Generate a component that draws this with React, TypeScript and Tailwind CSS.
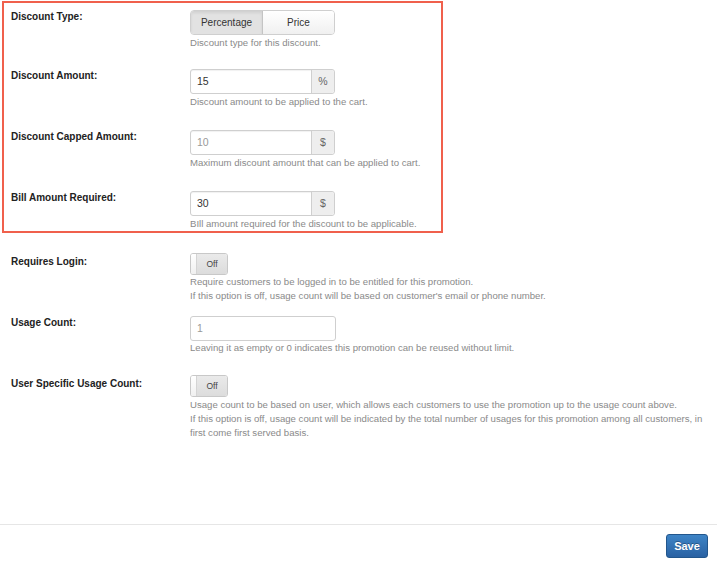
import React from 'react';

const font = { fontFamily: '"Liberation Sans", Arial, sans-serif' };

function Label({ children, pad = 'pt-0' }: { children: React.ReactNode; pad?: string }) {
  return (
    <div className={`w-[186px] shrink-0 pl-[7px] text-[10px] font-bold leading-[14px] text-[#222] ${pad}`}>
      {children}
    </div>
  );
}

function Help({ children }: { children: React.ReactNode }) {
  return <div className="text-[9.6px] leading-[14px] text-[#8a8a8a]">{children}</div>;
}

function AddonInput({ value, addon, muted }: { value: string; addon: string; muted?: boolean }) {
  return (
    <div className="flex h-[25px] w-[145px] rounded-[3px] border border-[#cfcfcf] shadow-[inset_0_1px_1px_rgba(0,0,0,0.06)]">
      <div className={`flex flex-1 items-center pl-[6px] text-[10.5px] ${muted ? 'text-[#999]' : 'text-[#333]'}`}>
        {value}
      </div>
      <div className="flex w-[23px] items-center justify-center rounded-r-[3px] border-l border-[#cfcfcf] bg-[#eeeeee] text-[10.5px] text-[#666]">
        {addon}
      </div>
    </div>
  );
}

function Toggle() {
  return (
    <div className="flex h-[22px] w-[38px] overflow-hidden rounded-[3px] border border-[#c8c8c8]">
      <div className="w-[6px] border-r border-[#d4d4d4] bg-gradient-to-b from-white to-[#f0f0f0]" />
      <div className="flex flex-1 items-center justify-center bg-gradient-to-b from-[#eaeaea] to-[#dcdcdc] text-[8.5px] text-[#444]">
        Off
      </div>
    </div>
  );
}

export default function App() {
  return (
    <div className="flex h-[564px] w-[717px] flex-col bg-white" style={font}>
      <div className="h-[525px] border-b border-[#e6e6e6]">
        <div className="ml-[2px] mt-[1px] w-[441px] border-2 border-[#f0604c] pt-[7px]">
          <div className="flex pb-[19px]">
            <Label>Discount Type:</Label>
            <div>
              <div className="flex h-[25px] w-[145px] overflow-hidden rounded-[4px] border border-[#cfcfcf] text-[10px] text-[#333]">
                <div className="flex w-[72px] items-center justify-center border-r border-[#c4c4c4] bg-[#e2e2e2] shadow-[inset_0_2px_3px_rgba(0,0,0,0.08)]">
                  Percentage
                </div>
                <div className="flex flex-1 items-center justify-center bg-gradient-to-b from-white to-[#f0f0f0]">
                  Price
                </div>
              </div>
              <div className="mt-[1px]">
                <Help>Discount type for this discount.</Help>
              </div>
            </div>
          </div>
          <div className="flex pb-[21px]">
            <Label>Discount Amount:</Label>
            <div>
              <AddonInput value="15" addon="%" />
              <div className="mt-[1px]">
                <Help>Discount amount to be applied to the cart.</Help>
              </div>
            </div>
          </div>
          <div className="flex pb-[21px]">
            <Label>Discount Capped Amount:</Label>
            <div>
              <AddonInput value="10" addon="$" muted />
              <div className="mt-[1px]">
                <Help>Maximum discount amount that can be applied to cart.</Help>
              </div>
            </div>
          </div>
          <div className="flex">
            <Label>Bill Amount Required:</Label>
            <div>
              <AddonInput value="30" addon="$" />
              <div className="mt-[1px]">
                <Help>BIll amount required for the discount to be applicable.</Help>
              </div>
            </div>
          </div>
        </div>

        <div className="mt-[20px] flex pl-[4px]">
          <Label pad="pt-[2px]">Requires Login:</Label>
          <div>
            <Toggle />
            <Help>Require customers to be logged in to be entitled for this promotion.</Help>
            <Help>If this option is off, usage count will be based on customer's email or phone number.</Help>
          </div>
        </div>

        <div className="mt-[13px] flex pl-[4px]">
          <Label>Usage Count:</Label>
          <div>
            <div className="flex h-[25px] w-[146px] items-center rounded-[3px] border border-[#cfcfcf] pl-[6px] text-[10.5px] text-[#999]">
              1
            </div>
            <Help>Leaving it as empty or 0 indicates this promotion can be reused without limit.</Help>
          </div>
        </div>

        <div className="mt-[20px] flex pl-[4px]">
          <Label pad="pt-[2px]">User Specific Usage Count:</Label>
          <div className="pr-[4px]">
            <Toggle />
            <div className="mt-[1px]">
              <Help>
                Usage count to be based on user, which allows each customers to use the promotion up to the usage count above.
              </Help>
              <Help>
                If this option is off, usage count will be indicated by the total number of usages for this promotion among all customers, in first come first served basis.
              </Help>
            </div>
          </div>
        </div>
      </div>

      <div className="flex justify-end pr-[9px] pt-[9px]">
        <button className="h-[24px] w-[42px] rounded-[3px] border border-[#22568c] bg-gradient-to-b from-[#3d84c6] to-[#2a62a3] text-[11px] font-bold text-white [text-shadow:0_-1px_0_rgba(0,0,0,0.3)]">
          Save
        </button>
      </div>
    </div>
  );
}
